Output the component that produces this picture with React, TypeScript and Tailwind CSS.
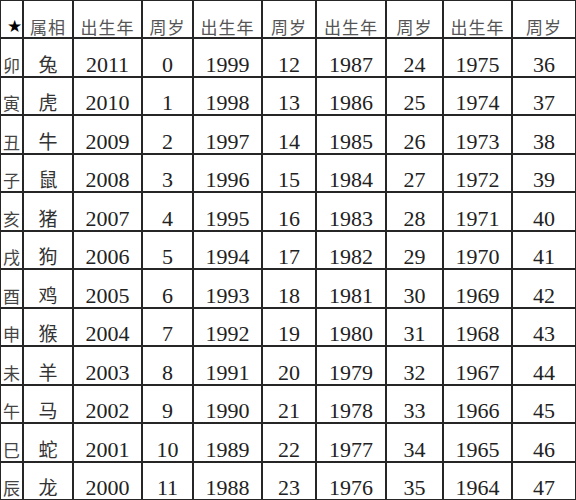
import { Fragment } from 'react';

const BRANCHES = ['卯', '寅', '丑', '子', '亥', '戌', '酉', '申', '未', '午', '巳', '辰'];
const ANIMALS = ['兔', '虎', '牛', '鼠', '猪', '狗', '鸡', '猴', '羊', '马', '蛇', '龙'];
const BASES = [2011, 1999, 1987, 1975];

const cjk = "font-['Noto_Sans_CJK_SC',sans-serif]";
const serif = "font-['Liberation_Serif','Noto_Sans_CJK_SC',serif]";

function HeadCell({ text }: { text: string }) {
    return (
        <div className={`flex items-end justify-center bg-white pb-[2px] text-[17px] leading-none tracking-[1px] text-[#555] ${cjk}`}>
            {text}
        </div>
    );
}

function NumCell({ value }: { value: number }) {
    return (
        <div className={`flex items-end justify-center bg-white text-[22px] leading-none text-[#222] ${serif}`}>
            {value}
        </div>
    );
}

export default function App() {
    return (
        <div className="grid h-[500px] w-[576px] grid-cols-[21px_48px_67px_49px_67px_52px_68px_55px_67px_62px] grid-rows-[repeat(13,1fr)] gap-[2px] bg-[#262626] p-[1px]">
            {/* header */}
            <div className="flex items-end justify-end bg-white pb-[3px] text-[17px] leading-none text-black">★</div>
            <HeadCell text="属相" />
            {BASES.map((b) => (
                <Fragment key={b}>
                    <HeadCell text="出生年" />
                    <HeadCell text="周岁" />
                </Fragment>
            ))}

            {/* rows */}
            {BRANCHES.map((br, i) => (
                <Fragment key={br}>
                    <div className={`flex items-end justify-center bg-white pb-[3px] text-[17px] leading-none text-[#444] ${cjk}`}>
                        {br}
                    </div>
                    <div className={`flex items-end justify-center bg-white pb-[3px] text-[19px] leading-none text-[#333] ${cjk}`}>
                        {ANIMALS[i]}
                    </div>
                    {BASES.map((b, k) => (
                        <Fragment key={b}>
                            <NumCell value={b - i} />
                            <NumCell value={k * 12 + i} />
                        </Fragment>
                    ))}
                </Fragment>
            ))}
        </div>
    );
}
